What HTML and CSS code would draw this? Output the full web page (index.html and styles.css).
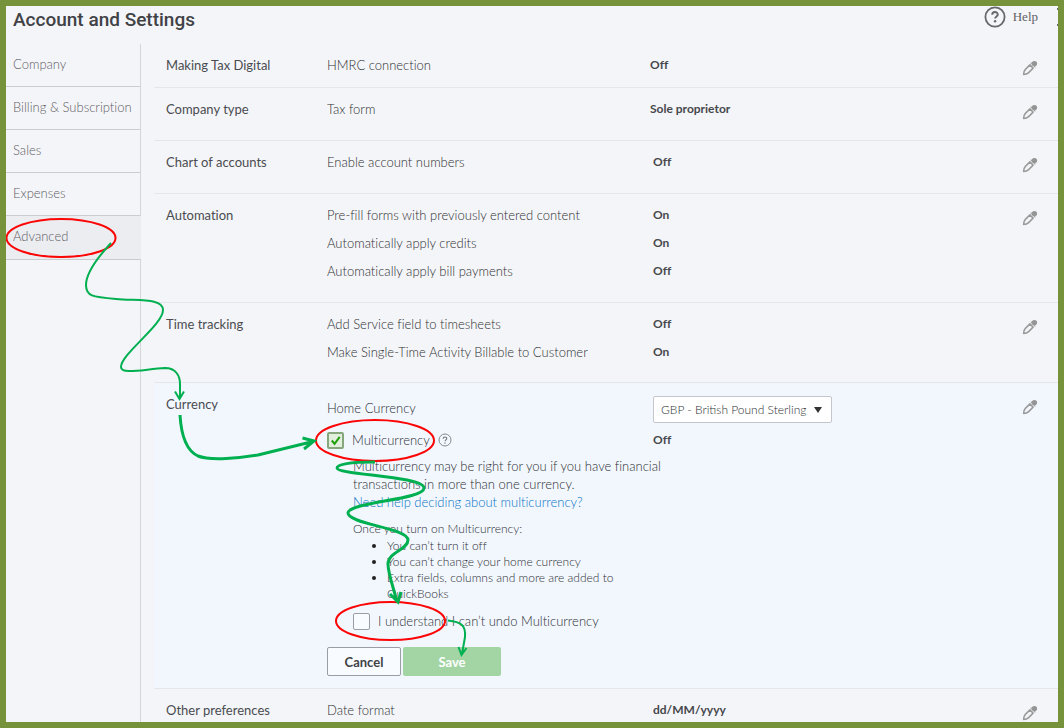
FILE: index.html
```html
<!DOCTYPE html>
<html lang="en">
<head>
<meta charset="utf-8">
<meta name="viewport" content="width=device-width, initial-scale=1">
<title>Account and Settings</title>
<link rel="stylesheet" href="styles.css">
</head>
<body>
<svg class="sprite" aria-hidden="true">
  <symbol id="pencil" viewBox="0 0 16 16">
    <path d="M1.600 14.400C1.600 12 2 10.800 3.400 9.400L7.900 4.900L11.100 8.100L6.600 12.600C5.200 14 4 14.400 1.600 14.400z" fill="none" stroke="#9a9a9a" stroke-width="1.500" stroke-linejoin="round"/>
    <path d="M8.700 2.600L13.400 7.300" stroke="#a4a4a4" stroke-width="1.200"/>
    <circle cx="12.400" cy="3.600" r="2.700" fill="#959595"/>
  </symbol>
</svg>
<div class="page">
  <header class="header">
    <h1 class="title">Account and Settings</h1>
    <a class="help" href="#help">
      <svg class="help-icon" viewBox="0 0 22 22" aria-hidden="true">
        <circle cx="11" cy="11" r="9.600" fill="none" stroke="#66686c" stroke-width="1.800"/>
        <path d="M8.200 8.800c0-3.600 5.600-3.600 5.600-.3 0 2-2.700 2-2.700 4.100" fill="none" stroke="#66686c" stroke-width="1.900"/>
        <circle cx="11.100" cy="15.200" r="1.200" fill="#66686c"/>
      </svg>
      Help
    </a>
    <svg class="gear-edge" viewBox="0 0 2 20" aria-hidden="true"><path d="M1 2h1v2H1zM1 18h1v2H1z" fill="#66686c"/></svg>
  </header>
  <div class="body">
    <nav class="sidebar">
      <a class="tab" href="#company">Company</a>
      <a class="tab" href="#billing">Billing &amp; Subscription</a>
      <a class="tab" href="#sales">Sales</a>
      <a class="tab" href="#expenses">Expenses</a>
      <a class="tab tab-active" href="#advanced" aria-current="page">Advanced</a>
    </nav>
    <main class="main">
      <section class="section section-compact section-company">
        <h2 class="section-title">Making Tax Digital</h2>
        <div class="rows"><div class="row"><span>HMRC connection</span><strong class="value">Off</strong></div></div>
        <button class="edit" aria-label="Edit Making Tax Digital"><svg class="pencil"><use href="#pencil"/></svg></button>
      </section>
      <section class="section section-company">
        <h2 class="section-title">Company type</h2>
        <div class="rows"><div class="row"><span>Tax form</span><strong class="value">Sole proprietor</strong></div></div>
        <button class="edit" aria-label="Edit Company type"><svg class="pencil"><use href="#pencil"/></svg></button>
      </section>
      <section class="section">
        <h2 class="section-title">Chart of accounts</h2>
        <div class="rows"><div class="row"><span>Enable account numbers</span><strong class="value">Off</strong></div></div>
        <button class="edit" aria-label="Edit Chart of accounts"><svg class="pencil"><use href="#pencil"/></svg></button>
      </section>
      <section class="section section-tall">
        <h2 class="section-title">Automation</h2>
        <div class="rows">
          <div class="row"><span>Pre-fill forms with previously entered content</span><strong class="value">On</strong></div>
          <div class="row"><span>Automatically apply credits</span><strong class="value">On</strong></div>
          <div class="row"><span>Automatically apply bill payments</span><strong class="value">Off</strong></div>
        </div>
        <button class="edit" aria-label="Edit Automation"><svg class="pencil"><use href="#pencil"/></svg></button>
      </section>
      <section class="section">
        <h2 class="section-title">Time tracking</h2>
        <div class="rows">
          <div class="row"><span>Add Service field to timesheets</span><strong class="value">Off</strong></div>
          <div class="row"><span>Make Single-Time Activity Billable to Customer</span><strong class="value">On</strong></div>
        </div>
        <button class="edit" aria-label="Edit Time tracking"><svg class="pencil"><use href="#pencil"/></svg></button>
      </section>
      <section class="section section-open">
        <h2 class="section-title">Currency</h2>
        <form class="rows currency">
          <div class="row">
            <label class="home-label" for="home">Home Currency</label>
            <span class="select-wrap">
              <select class="select" id="home"><option>GBP - British Pound Sterling</option></select>
              <svg class="caret" viewBox="0 0 8 6" aria-hidden="true"><path d="M0 0h8L4 6z" fill="#333"/></svg>
            </span>
          </div>
          <div class="row">
            <div class="check">
              <input class="box box-green" type="checkbox" id="multi" checked>
              <label for="multi">Multicurrency</label>
              <svg class="hint" viewBox="0 0 14 14" aria-hidden="true">
                <circle cx="7" cy="7" r="6" fill="none" stroke="#85888e"/>
                <path d="M5.200 5.700c0-2.200 3.600-2.200 3.600-.1 0 1.200-1.800 1.300-1.800 2.700M7 9.500v1.300" fill="none" stroke="#6e7177" stroke-width="1.100"/>
              </svg>
            </div>
            <strong class="value">Off</strong>
          </div>
          <div class="details">
            <p class="intro">Multicurrency may be right for you if you have financial transactions in more than one currency.<br><a class="link" href="#learn">Need help deciding about multicurrency?</a></p>
            <div class="notes">
              <p class="note">Once you turn on Multicurrency:</p>
              <ul class="list">
                <li>You can’t turn it off</li>
                <li>You can’t change your home currency</li>
                <li>Extra fields, columns and more are added to QuickBooks</li>
              </ul>
            </div>
            <div class="check">
              <input class="box" type="checkbox" id="agree">
              <label for="agree">I understand I can’t undo Multicurrency</label>
            </div>
          </div>
          <div class="actions">
            <button class="btn btn-cancel" type="button">Cancel</button>
            <button class="btn btn-save" type="button">Save</button>
          </div>
        </form>
        <button class="edit" aria-label="Edit Currency"><svg class="pencil"><use href="#pencil"/></svg></button>
      </section>
      <section class="section section-last">
        <h2 class="section-title">Other preferences</h2>
        <div class="rows"><div class="row"><span>Date format</span><strong class="value">dd/MM/yyyy</strong></div></div>
        <button class="edit" aria-label="Edit Other preferences"><svg class="pencil"><use href="#pencil"/></svg></button>
      </section>
    </main>
  </div>
  <svg class="marks" width="1064" height="728" viewBox="0 0 1064 728" aria-hidden="true">
    <g fill="none" stroke="#fb0505" stroke-width="2">
      <ellipse cx="61" cy="238" rx="54.500" ry="19"/>
      <ellipse cx="375" cy="440.500" rx="59" ry="20.500"/>
      <ellipse cx="390.500" cy="621" rx="54.500" ry="19"/>
    </g>
    <g fill="none" stroke="#00b050">
      <path stroke-width="2" d="M111 243C98 257 86 272 86 285C86 296 92 297 116 299C139 301 163 298 163 310C163 325 121 354 121 367C121 375 145 369 165 368C176 368 180 376 180 384V398M175 391.500L179.500 399L184 391.500"/>
      <path stroke-width="3" d="M180 415C181 432 185 450 198 456C210 461 241 458 258 455L313 441.500M302.500 438L314 441L304 449"/>
      <path stroke-width="3" d="M375 462C350 462 337 464 337 468C337 475 424 476 424 488C424 500 348 502 348 513C348 524 408 528 408 540C408 550 388 552 388 564C388 574 394 589 397 602M390 594L398 602L401 592"/>
      <path stroke-width="2" d="M448 620.500C461 622 466 625 465 637L462 654M458.500 647L461.500 655L466.500 648"/>
    </g>
  </svg>
</div>
</body>
</html>
```
FILE: styles.css
```css
* {
  box-sizing: border-box;
}

body {
  margin: 0;
  background: #f4f5f8;
  color: #2e3034;
  font: 300 13px/20px Lato, "Open Sans", sans-serif;
  font-variant-ligatures: none;
}

h1, h2, p, ul {
  margin: 0;
}

.sprite {
  display: none;
}

.page {
  position: relative;
  display: flex;
  flex-direction: column;
  min-height: 100vh;
  border: 6px solid #76933c;
  overflow: hidden;
}

.header {
  display: flex;
  align-items: flex-start;
  height: 38px;
  padding-left: 7px;
}

.title {
  flex: 1;
  color: #404246;
  font: 500 19px/28px Roboto, sans-serif;
}

.help {
  display: flex;
  align-items: center;
  gap: 7px;
  margin-right: 18px;
  color: #606266;
  font: 13px/22px "Liberation Serif", serif;
  text-decoration: none;
}

.help-icon {
  width: 22px;
  height: 22px;
}

.gear-edge {
  width: 2px;
  height: 20px;
}

.body {
  display: flex;
  flex: 1;
}

.sidebar {
  flex: none;
  width: 135px;
  border-right: 1px solid #d5d6d9;
}

.tab {
  display: block;
  height: 43px;
  padding: 10px 7px;
  border-bottom: 1px solid #cbccd0;
  color: #5e6066;
  text-decoration: none;
  white-space: nowrap;
}

.tab-active {
  height: 44px;
  margin-right: -1px;
  background: #ecedf1;
}

.main {
  flex: 1;
  min-width: 0;
  margin-left: 13px;
}

.section {
  display: grid;
  grid-template-columns: 161px minmax(0, 1fr) 36px;
  padding: 11px 0 20px 12px;
  border-bottom: 1px solid #e5e6ea;
}

.section-compact {
  padding-bottom: 11px;
}

.section-tall {
  padding-bottom: 21px;
}

.section-title {
  color: #4a4c50;
  font-size: 13px;
  font-weight: 400;
  line-height: 20px;
}

.rows {
  display: flex;
  flex-direction: column;
  gap: 8px;
}

.row {
  display: grid;
  grid-template-columns: 326px minmax(0, 1fr);
}

.section-company .row {
  grid-template-columns: 323px minmax(0, 1fr);
}

.value {
  color: #46484c;
  font-size: 12px;
  font-weight: 700;
}

.edit {
  display: flex;
  justify-content: flex-start;
  align-self: start;
  margin-top: 5px;
  padding: 0;
  border: 0;
  background: none;
}

.pencil {
  width: 16px;
  height: 16px;
}

.section-open {
  padding-bottom: 12px;
  background: #f2f7fe;
}

.currency .row {
  align-items: center;
}

.currency {
  gap: 7px;
  margin-top: 2px;
}

.home-label {
  padding-bottom: 4px;
}

.select-wrap {
  position: relative;
  width: 179px;
}

.select {
  display: block;
  width: 100%;
  height: 27px;
  padding: 0 7px;
  border: 1px solid #c3c7cd;
  border-radius: 2px;
  background: #fff;
  color: #2e3034;
  font: 300 12px/20px Lato, sans-serif;
  appearance: none;
}

.caret {
  position: absolute;
  top: 11px;
  right: 10px;
  width: 8px;
  height: 6px;
  pointer-events: none;
}

.check {
  display: flex;
  align-items: center;
  gap: 8px;
}

.box {
  width: 17px;
  height: 17px;
  margin: 0;
  border: 1px solid #9a9da3;
  border-radius: 2px;
  background: #f8fbff;
  appearance: none;
}

.box-green {
  border: 2px solid #86a77c;
  background: #e2efdc url("data:image/svg+xml,%3Csvg xmlns='http://www.w3.org/2000/svg' viewBox='0 0 14 14'%3E%3Cpath d='M3 7l3 3.500L11.500 3' fill='none' stroke='%2322a010' stroke-width='2.200'/%3E%3C/svg%3E") center / contain no-repeat;
}

.hint {
  width: 14px;
  height: 14px;
}

.details {
  display: flex;
  flex-direction: column;
  gap: 9px;
  margin-left: 26px;
}

.intro {
  max-width: 308px;
  line-height: 18px;
}

.link {
  color: #0a74c4;
  text-decoration: none;
}

.notes {
  max-width: 270px;
  font-size: 12px;
  line-height: 16px;
}

.note {
  line-height: 18px;
}

.list {
  padding-left: 34px;
}

.list li::marker {
  color: #222;
}

.actions {
  display: flex;
  gap: 2px;
  margin-top: 9px;
}

.btn {
  height: 29px;
  padding: 0;
  border: 0;
  border-radius: 2px;
  font: 700 13px/20px Lato, sans-serif;
}

.btn-cancel {
  width: 74px;
  border: 1px solid #9a9da3;
  background: #f8fbff;
  color: #404246;
}

.btn-save {
  width: 98px;
  background: #a3d5a4;
  color: #fff;
}

.section-last {
  padding-bottom: 0;
  border: 0;
}

.marks {
  position: absolute;
  top: -6px;
  left: -6px;
  pointer-events: none;
}
```
